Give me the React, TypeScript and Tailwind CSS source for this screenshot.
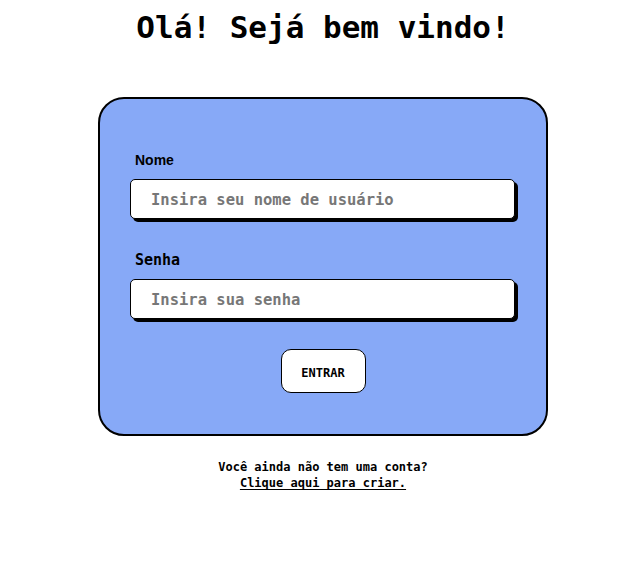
const MONO = "font-['DejaVu_Sans_Mono',monospace]";

export default function App() {
  return (
    <div className={`flex min-h-screen flex-col items-center bg-white pl-[6px] text-black ${MONO}`}>
      <h1 className="mt-[8px] text-[31px] font-bold leading-[38px]">Olá! Sejá bem vindo!</h1>

      <form
        className="mt-[51px] flex w-[450px] flex-col rounded-[26px] border-2 border-black bg-[#87a9f7] px-[30px] pt-[51px] pb-[41px]"
        onSubmit={(e) => e.preventDefault()}
      >
        <label htmlFor="nome" className="mb-[9px] block h-5 pl-[5px] font-['Liberation_Sans',Arial,sans-serif] text-[14px] font-bold leading-5">
          Nome
        </label>
        <input
          id="nome"
          type="text"
          placeholder="Insira seu nome de usuário"
          className="h-10 w-[385px] rounded-[5px] border border-black bg-white pt-[2px] pl-5 text-[15.5px] font-bold shadow-[3px_3px_0_#000] outline-none placeholder:text-[#777]"
        />

        <label htmlFor="senha" className="mt-[31px] mb-[9px] block h-5 pl-[5px] text-[15px] font-bold leading-5">
          Senha
        </label>
        <input
          id="senha"
          type="password"
          placeholder="Insira sua senha"
          className="h-10 w-[385px] rounded-[5px] border border-black bg-white pt-[2px] pl-5 text-[15.5px] font-bold shadow-[3px_3px_0_#000] outline-none placeholder:text-[#777]"
        />

        <button
          type="submit"
          className="mx-auto mt-[30px] h-[44px] w-[85px] rounded-[10px] border border-black bg-white pt-[3px] text-[12px] font-bold"
        >
          ENTRAR
        </button>
      </form>

      <p className="mt-[23px] text-center text-[12px] font-bold leading-4">
        Você ainda não tem uma conta?
        <br />
        <a href="#" className="underline underline-offset-2">
          Clique aqui para criar.
        </a>
      </p>
    </div>
  );
}
